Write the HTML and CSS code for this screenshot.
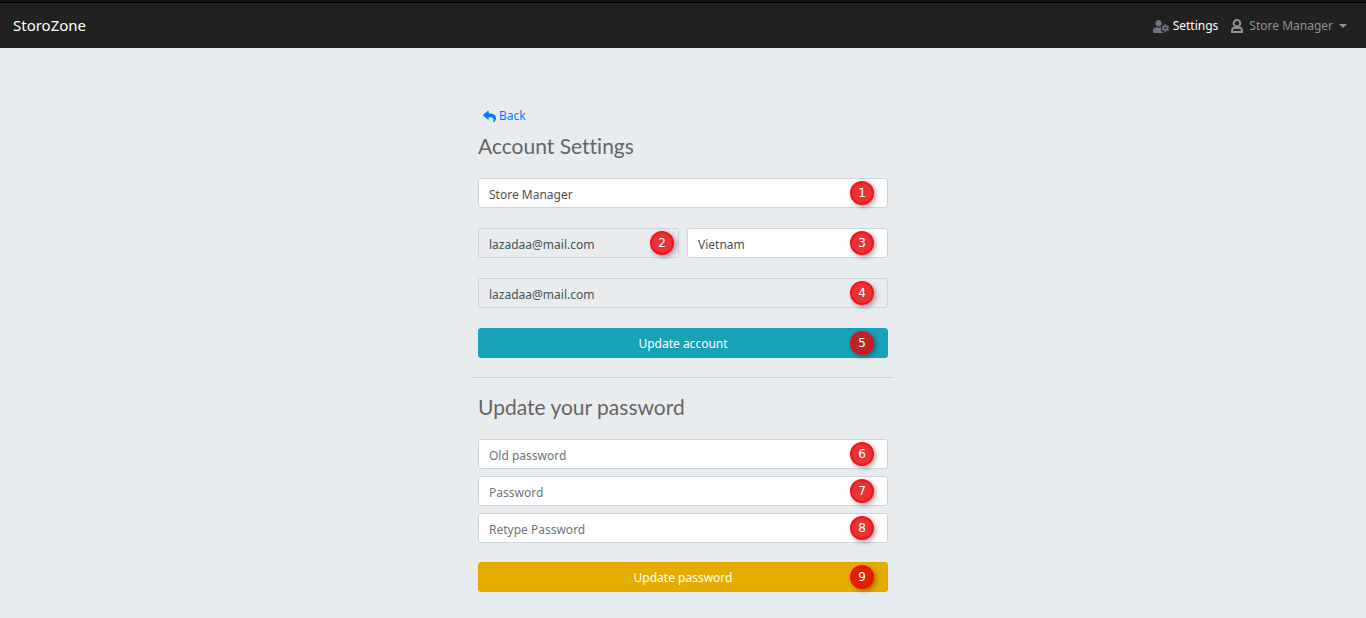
FILE: index.html
```html
<!DOCTYPE html>
<html lang="en">
<head>
<meta charset="utf-8">
<title>StoroZone - Account Settings</title>
<meta name="viewport" content="width=device-width, initial-scale=1">
<link rel="stylesheet" href="styles.css">
</head>
<body>
<header class="navbar">
  <a class="brand" href="#">StoroZone</a>
  <nav class="nav">
    <a class="nav-link active" href="#">
      <svg class="icon-settings" viewBox="0 0 640 512" aria-hidden="true"><path d="M610.500 341.300c2.600-14.100 2.600-28.500 0-42.600l25.800-14.900c3-1.700 4.300-5.200 3.300-8.500-6.700-21.600-18.200-41.200-33.200-57.400-2.300-2.500-6-3.100-9-1.400l-25.800 14.900c-10.900-9.300-23.400-16.500-36.900-21.300v-29.800c0-3.400-2.400-6.400-5.700-7.100-22.300-5-45-4.800-66.200 0-3.300.7-5.700 3.700-5.700 7.100v29.800c-13.500 4.800-26 12-36.900 21.300l-25.800-14.900c-2.900-1.700-6.700-1.100-9 1.400-15 16.200-26.500 35.800-33.200 57.400-1 3.300.4 6.800 3.300 8.500l25.800 14.900c-2.600 14.100-2.600 28.500 0 42.600l-25.800 14.900c-3 1.700-4.300 5.200-3.300 8.500 6.700 21.600 18.200 41.100 33.200 57.400 2.300 2.500 6 3.100 9 1.400l25.800-14.900c10.900 9.300 23.400 16.500 36.900 21.300v29.800c0 3.400 2.400 6.400 5.700 7.100 22.300 5 45 4.800 66.200 0 3.300-.7 5.700-3.700 5.700-7.100v-29.800c13.500-4.800 26-12 36.900-21.300l25.800 14.900c2.900 1.700 6.700 1.100 9-1.400 15-16.200 26.500-35.800 33.200-57.400 1-3.300-.4-6.800-3.300-8.500l-25.800-14.900zM496 368.500c-26.800 0-48.500-21.800-48.500-48.500s21.800-48.500 48.500-48.500 48.500 21.800 48.500 48.500-21.700 48.500-48.500 48.500zM224 256c70.700 0 128-57.300 128-128S294.700 0 224 0 96 57.300 96 128s57.300 128 128 128zm201.200 226.500c-2.300-1.200-4.600-2.600-6.800-3.900l-7.900 4.600c-6 3.400-12.800 5.300-19.600 5.300-10.900 0-21.400-4.600-28.900-12.600-18.300-19.800-32.300-43.900-40.200-69.600-5.500-17.700 1.900-36.400 17.900-45.700l7.900-4.600c-.1-2.600-.1-5.200 0-7.800l-7.900-4.600c-16-9.200-23.400-28-17.900-45.700.9-2.900 2.200-5.800 3.200-8.700-3.800-.3-7.500-1.200-11.400-1.200h-16.700c-22.200 10.200-46.900 16-72.900 16s-50.600-5.800-72.900-16h-16.700C60.200 288 0 348.200 0 422.400V464c0 26.500 21.500 48 48 48h352c10.100 0 19.500-3.200 27.200-8.500-1.200-3.800-2-7.700-2-11.800v-9.200z"/></svg>
      <span>Settings</span>
    </a>
    <a class="nav-link nav-user" href="#">
      <svg class="icon-user" viewBox="0 0 12 14" aria-hidden="true"><circle cx="6" cy="4.300" r="3.300"/><path d="M3.500 8.500C1.800 9 1 10.300 1 11.700V13h10v-1.300c0-1.400-.8-2.700-2.500-3.200-1.600.7-3.400.7-5 0z"/></svg>
      <span>Store Manager</span>
      <span class="caret"></span>
    </a>
  </nav>
</header>
<main class="content">
  <a class="back" href="#">
    <svg class="icon-back" viewBox="0 0 512 512" aria-hidden="true"><path d="M8.300 189.800 184.300 37.900C199.700 24.500 224 35.300 224 56v80.100c160.600 1.800 288 34 288 186.200 0 61.400-39.600 122.300-83.300 154.100-13.700 9.900-33.100-2.500-28.100-18.600 45.300-145-21.500-183.500-176.600-185.700V360c0 20.700-24.300 31.500-39.700 18.200l-176-152c-11.100-9.600-11.100-26.800 0-36.400z"/></svg>
    <span>Back</span>
  </a>
  <form class="form">
    <h1 class="title">Account Settings</h1>
    <div class="fields">
      <div class="field"><input class="control" type="text" aria-label="Name" value="Store Manager"><span class="badge">1</span></div>
      <div class="row">
        <div class="field"><input class="control" type="text" aria-label="Username" value="lazadaa@mail.com" readonly><span class="badge badge-edge">2</span></div>
        <div class="field"><input class="control" type="text" aria-label="Country" value="Vietnam"><span class="badge">3</span></div>
      </div>
      <div class="field"><input class="control" type="email" aria-label="Email" value="lazadaa@mail.com" readonly><span class="badge">4</span></div>
      <div class="field"><button class="button button-info" type="submit">Update account</button><span class="badge badge-dark">5</span></div>
    </div>
  </form>
  <hr class="divider">
  <form class="form">
    <h2 class="title">Update your password</h2>
    <div class="fields fields-tight">
      <div class="field"><input class="control" type="password" aria-label="Old password" placeholder="Old password"><span class="badge">6</span></div>
      <div class="field"><input class="control" type="password" aria-label="Password" placeholder="Password"><span class="badge">7</span></div>
      <div class="field"><input class="control" type="password" aria-label="Retype Password" placeholder="Retype Password"><span class="badge">8</span></div>
    </div>
    <div class="field field-submit"><button class="button button-warning" type="submit">Update password</button><span class="badge badge-warm">9</span></div>
  </form>
</main>
</body>
</html>
```
FILE: styles.css
```css
* {
  box-sizing: border-box;
}

body {
  margin: 0;
  background: #e8ecef;
  color: #495057;
  font-family: "Noto Sans", "Open Sans", sans-serif;
  font-size: 12px;
  line-height: 20px;
}

a {
  text-decoration: none;
}

.navbar {
  display: flex;
  align-items: center;
  justify-content: space-between;
  height: 48px;
  padding: 0 19px 0 13px;
  border-top: 2px solid #111;
  background: #212121;
  box-shadow: inset 0 1px #000;
}

.brand {
  color: #fff;
  font-size: 15px;
}

.nav {
  display: flex;
  gap: 13px;
  padding-top: 2px;
}

.nav-link {
  display: flex;
  align-items: center;
  gap: 4px;
  color: #909090;
}

.nav-link.active {
  color: #fff;
}

.nav-user {
  gap: 6px;
}

.icon-settings {
  width: 16px;
  height: 13px;
  fill: #6c757d;
}

.icon-user {
  width: 12px;
  height: 14px;
  fill: none;
  stroke: #909090;
  stroke-width: 2;
}

.caret {
  border: 4px solid transparent;
  border-top-color: #909090;
  border-bottom: 0;
}

.content {
  width: 100%;
  max-width: 422px;
  margin: 0 auto;
  padding: 58px 0 25px;
}

.back {
  display: flex;
  align-items: center;
  width: max-content;
  gap: 3px;
  margin-left: 11px;
  color: #007bff;
}

.icon-back {
  width: 13px;
  height: 13px;
  fill: #007bff;
}

.form {
  padding: 0 6px;
}

.title {
  margin: 0 0 20px;
  color: #666;
  font-family: Lato, sans-serif;
  font-size: 21px;
  font-variant-ligatures: none;
  font-weight: 400;
  line-height: 24px;
}

.back + .form {
  margin-top: 8px;
}

.fields {
  display: grid;
  gap: 20px;
}

.fields-tight {
  gap: 7px;
}

.row {
  display: grid;
  grid-template-columns: 1fr 1fr;
  gap: 8px;
}

.field {
  position: relative;
}

.field-submit {
  margin-top: 19px;
}

.control,
.button {
  display: block;
  width: 100%;
  height: 30px;
  padding: 2px 10px 0;
  border: 1px solid #ced4da;
  border-radius: 3px;
  font: inherit;
}

.control {
  background: #fff;
  color: #495057;
}

.control:read-only {
  background: #e8ecef;
}

.control::placeholder {
  color: #6c757d;
}

.button {
  color: #fff;
}

.button-info {
  border-color: #17a2b8;
  background: #17a2b8;
}

.button-warning {
  border-color: #dfa800;
  background: #e5ad00;
}

.badge {
  position: absolute;
  top: 3px;
  right: 14px;
  width: 24px;
  height: 24px;
  border: 2px solid #fb1014;
  border-radius: 50%;
  background: #e53338;
  box-shadow: 2px 2px 5px rgba(0, 0, 0, 0.35);
  color: #fff;
  font-family: "DejaVu Sans", sans-serif;
  font-size: 12px;
  line-height: 20px;
  text-align: center;
}

.badge-edge {
  right: 5px;
}

.badge-dark {
  border-color: #e01016;
  background: #b9232b;
}

.badge-warm {
  border-color: #fb0a00;
  background: #dd2400;
}

.divider {
  height: 1px;
  margin: 19px 0 17px;
  border: 0;
  background: #cfd4d8;
}
```
